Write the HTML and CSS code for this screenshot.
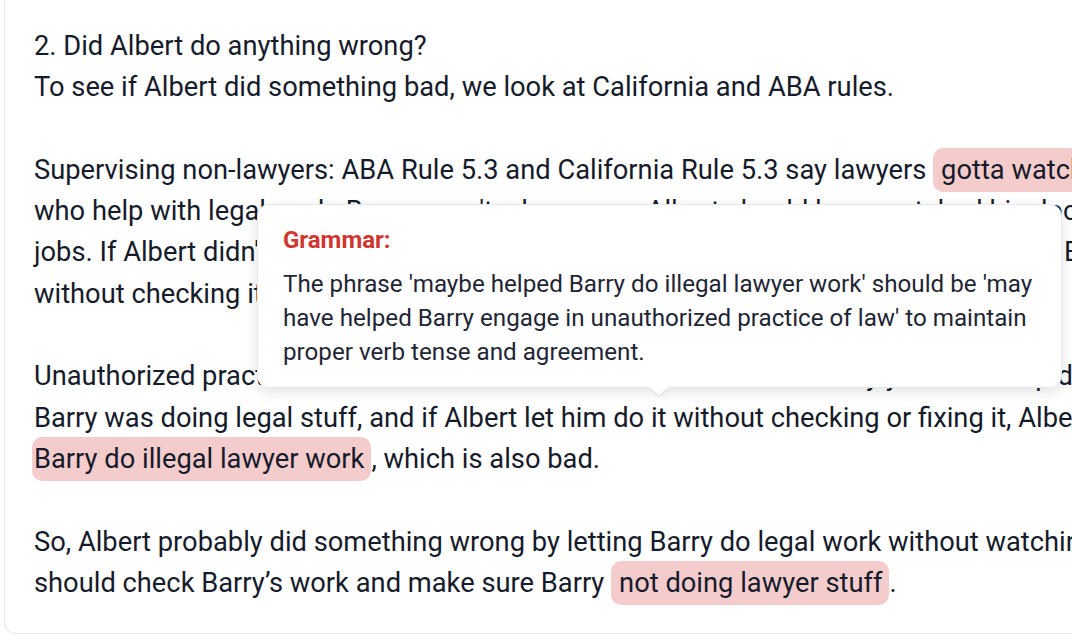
FILE: index.html
```html
<!DOCTYPE html>
<html>
<head>
    <title>Answer Review</title>
    <link rel="stylesheet" href="styles.css">
</head>
<body>
    <div class="doc">
        <div class="answer">
            2. Did Albert do anything wrong?<br>
            To see if Albert did something bad, we look at California and ABA rules.<br>
            <br>
            Supervising non-lawyers: ABA Rule 5.3 and California Rule 5.3 say lawyers <span class="issue">gotta watch over the people</span><br>
            who help with legal work. Barry wasn't a lawyer, so Albert should have watched his documents and<br>
            jobs. If Albert didn't watch Barry or check what he was doing, then he broke rules and Barry<br>
            without checking it, that would be a problem for Albert.<br>
            <br>
            Unauthorized practice of law: ABA Rule 5.5 and California Rule 5.5 say you can't help do legal work<br>
            Barry was doing legal stuff, and if Albert let him do it without checking or fixing it, Albert maybe helped<br>
            <span class="issue issue-start">Barry do illegal lawyer work</span>, which is also bad.<br>
            <br>
            So, Albert probably did something wrong by letting Barry do legal work without watching him closely. Albert<br>
            should check Barry’s work and make sure Barry <span class="issue">not doing lawyer stuff</span>.
        </div>

        <div class="tooltip">
            <div class="tooltip-title">Grammar:</div>
            <div class="tooltip-body">The phrase 'maybe helped Barry do illegal lawyer work' should be 'may have helped Barry engage in unauthorized practice of law' to maintain proper verb tense and agreement.</div>
        </div>
    </div>
</body>
</html>
```

FILE: styles.css
```css
html, body {
    margin: 0;
    padding: 0;
    background-color: #fff;
    overflow: hidden;
}
body {
    font-family: Roboto, "Liberation Sans", Arial, sans-serif;
    color: #161b2b;
}
.doc {
    position: relative;
    margin-left: 4px;
    width: 1400px;
    border: 1px solid #e4e6ec;
    border-top: none;
    border-radius: 0 0 12px 12px;
    padding: 26px 30px 29px 29px;
}
.answer {
    font-size: 27.3px;
    line-height: 41.3px;
    white-space: nowrap;
}
.issue {
    background-color: #f5cccc;
    border-radius: 10px;
    padding: 6px 7px 6px 8px;
}
.issue-start {
    padding-left: 2px;
    margin-left: -2px;
}
.tooltip {
    position: absolute;
    left: 252px;
    top: 204px;
    width: 805px;
    box-sizing: border-box;
    background-color: #fff;
    border: 1px solid #e6e8ee;
    border-radius: 12px;
    box-shadow: 0 4px 14px rgba(20, 24, 40, 0.12);
    padding: 20px 26px 18px 25px;
}
.tooltip::after {
    content: "";
    position: absolute;
    left: 391px;
    bottom: -8px;
    border-left: 10px solid transparent;
    border-right: 10px solid transparent;
    border-top: 8px solid #fff;
    filter: drop-shadow(0 2px 1px rgba(20, 24, 40, 0.06));
}
.tooltip-title {
    color: #d0352f;
    font-size: 24px;
    font-weight: bold;
    line-height: 30px;
    margin-bottom: 12px;
}
.tooltip-body {
    color: #1f2535;
    font-size: 24.2px;
    line-height: 34px;
}
```
